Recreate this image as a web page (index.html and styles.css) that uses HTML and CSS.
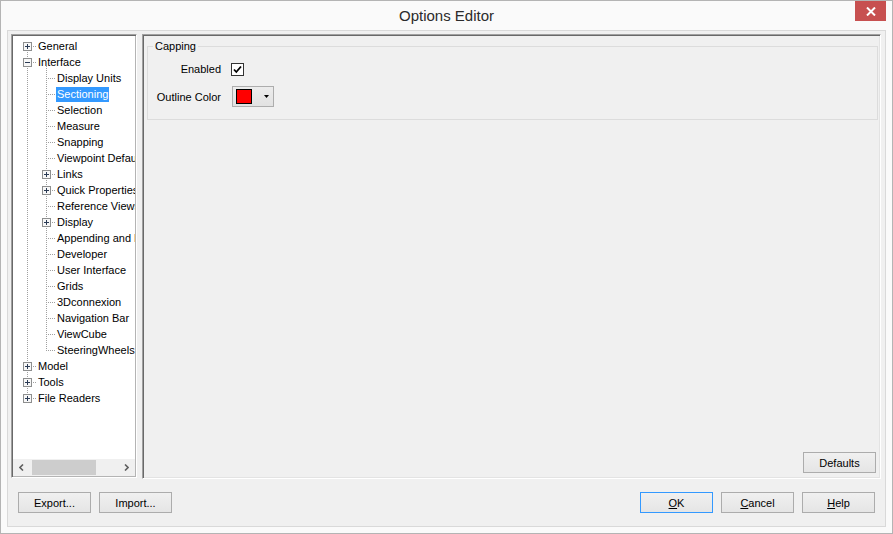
FILE: index.html
```html
<!DOCTYPE html>
<html>
<head>
<meta charset="utf-8">
<title>Options Editor</title>
<link rel="stylesheet" href="styles.css">
</head>
<body>
<div class="window">
  <div class="titlebar">
    <div></div>
    <div class="title">Options Editor</div>
    <div class="tb-right">
      <button class="close" aria-label="Close">
        <svg width="10" height="9" viewBox="0 0 10 9"><path d="M1 0.5L9 8.5M9 0.5L1 8.5" stroke="#fff" stroke-width="2"/></svg>
      </button>
    </div>
  </div>
  <div class="client">
    <div class="main">
      <div class="tree">
        <div class="tree-list">
          <div class="row"><span class="conn"><svg width="9" height="9" viewBox="0 0 9 9"><rect x="0.5" y="0.5" width="8" height="8" fill="#f7f7f7" stroke="#8e8f8f"/><path d="M2 4.5h5M4.5 2v5" stroke="#2b3b55"/></svg></span><span class="lbl">General</span></div>
          <div class="row"><span class="conn"><svg width="9" height="9" viewBox="0 0 9 9"><rect x="0.5" y="0.5" width="8" height="8" fill="#f7f7f7" stroke="#8e8f8f"/><path d="M2 4.5h5" stroke="#2b3b55"/></svg></span><span class="lbl">Interface</span></div>
          <div class="row l1"><span class="conn"></span><span class="lbl">Display Units</span></div>
          <div class="row l1"><span class="conn"></span><span class="lbl selected">Sectioning</span></div>
          <div class="row l1"><span class="conn"></span><span class="lbl">Selection</span></div>
          <div class="row l1"><span class="conn"></span><span class="lbl">Measure</span></div>
          <div class="row l1"><span class="conn"></span><span class="lbl">Snapping</span></div>
          <div class="row l1"><span class="conn"></span><span class="lbl">Viewpoint Defaults</span></div>
          <div class="row l1"><span class="conn"><svg width="9" height="9" viewBox="0 0 9 9"><rect x="0.5" y="0.5" width="8" height="8" fill="#f7f7f7" stroke="#8e8f8f"/><path d="M2 4.5h5M4.5 2v5" stroke="#2b3b55"/></svg></span><span class="lbl">Links</span></div>
          <div class="row l1"><span class="conn"><svg width="9" height="9" viewBox="0 0 9 9"><rect x="0.5" y="0.5" width="8" height="8" fill="#f7f7f7" stroke="#8e8f8f"/><path d="M2 4.5h5M4.5 2v5" stroke="#2b3b55"/></svg></span><span class="lbl">Quick Properties</span></div>
          <div class="row l1"><span class="conn"></span><span class="lbl">Reference Views</span></div>
          <div class="row l1"><span class="conn"><svg width="9" height="9" viewBox="0 0 9 9"><rect x="0.5" y="0.5" width="8" height="8" fill="#f7f7f7" stroke="#8e8f8f"/><path d="M2 4.5h5M4.5 2v5" stroke="#2b3b55"/></svg></span><span class="lbl">Display</span></div>
          <div class="row l1"><span class="conn"></span><span class="lbl">Appending and Merging</span></div>
          <div class="row l1"><span class="conn"></span><span class="lbl">Developer</span></div>
          <div class="row l1"><span class="conn"></span><span class="lbl">User Interface</span></div>
          <div class="row l1"><span class="conn"></span><span class="lbl">Grids</span></div>
          <div class="row l1"><span class="conn"></span><span class="lbl">3Dconnexion</span></div>
          <div class="row l1"><span class="conn"></span><span class="lbl">Navigation Bar</span></div>
          <div class="row l1"><span class="conn"></span><span class="lbl">ViewCube</span></div>
          <div class="row l1"><span class="conn"></span><span class="lbl">SteeringWheels</span></div>
          <div class="row"><span class="conn"><svg width="9" height="9" viewBox="0 0 9 9"><rect x="0.5" y="0.5" width="8" height="8" fill="#f7f7f7" stroke="#8e8f8f"/><path d="M2 4.5h5M4.5 2v5" stroke="#2b3b55"/></svg></span><span class="lbl">Model</span></div>
          <div class="row"><span class="conn"><svg width="9" height="9" viewBox="0 0 9 9"><rect x="0.5" y="0.5" width="8" height="8" fill="#f7f7f7" stroke="#8e8f8f"/><path d="M2 4.5h5M4.5 2v5" stroke="#2b3b55"/></svg></span><span class="lbl">Tools</span></div>
          <div class="row"><span class="conn"><svg width="9" height="9" viewBox="0 0 9 9"><rect x="0.5" y="0.5" width="8" height="8" fill="#f7f7f7" stroke="#8e8f8f"/><path d="M2 4.5h5M4.5 2v5" stroke="#2b3b55"/></svg></span><span class="lbl">File Readers</span></div>
        </div>
        <div class="hscroll">
          <span class="sb-btn"><svg width="5" height="7" viewBox="0 0 5 7"><path d="M4 0.5L1 3.5L4 6.5" fill="none" stroke="#606060" stroke-width="1.6"/></svg></span>
          <span class="sb-track"><span class="sb-thumb"></span></span>
          <span class="sb-btn"><svg width="5" height="7" viewBox="0 0 5 7"><path d="M1 0.5L4 3.5L1 6.5" fill="none" stroke="#606060" stroke-width="1.6"/></svg></span>
        </div>
      </div>
      <div class="panel">
        <fieldset class="group">
          <legend>Capping</legend>
          <div class="form">
            <span class="flabel">Enabled</span>
            <span class="check"><svg width="11" height="11" viewBox="0 0 11 11"><path d="M2 5.5L4.3 8L9 2.5" fill="none" stroke="#000" stroke-width="1.8"/></svg></span>
            <span class="flabel">Outline Color</span>
            <span class="color-btn"><span class="swatch"></span><svg class="dd" width="5" height="3" viewBox="0 0 5 3"><path d="M0 0H5L2.5 3Z" fill="#000"/></svg></span>
          </div>
        </fieldset>
        <button class="btn defaults">Defaults</button>
      </div>
    </div>
    <div class="footer">
      <div class="btn-group">
        <button class="btn">Export...</button>
        <button class="btn">Import...</button>
      </div>
      <div class="btn-group">
        <button class="btn default"><u>O</u>K</button>
        <button class="btn"><u>C</u>ancel</button>
        <button class="btn"><u>H</u>elp</button>
      </div>
    </div>
  </div>
</div>
</body>
</html>
```

FILE: styles.css
```css
* { box-sizing: border-box; }

body {
  margin: 0;
  font-family: "Liberation Sans", Arial, sans-serif;
  font-size: 11px;
  color: #000;
  background: #fff;
}

.window {
  width: 893px;
  height: 534px;
  border: 1px solid #b4b4b4;
  background: #fafafa;
  display: flex;
  flex-direction: column;
}

.titlebar {
  height: 29px;
  flex: none;
  display: grid;
  grid-template-columns: 1fr auto 1fr;
}

.title {
  font-size: 15px;
  line-height: 18px;
  padding-top: 6px;
  color: #2b2b2b;
}

.tb-right {
  display: flex;
  justify-content: flex-end;
  align-items: flex-start;
  padding-right: 6px;
}

.close {
  width: 31px;
  height: 20px;
  border: 0;
  padding: 0;
  background: #c75050;
  display: flex;
  align-items: center;
  justify-content: center;
}

.close svg { display: block; }

.client {
  flex: 1;
  margin: 0 6px 6px 6px;
  border: 1px solid #d9d9d9;
  background: #f0f0f0;
  padding: 3px 4px 0 3px;
  display: flex;
  flex-direction: column;
}

.main {
  display: flex;
  gap: 5px;
  height: 445px;
  align-items: flex-start;
}

/* tree */
.tree {
  width: 126px;
  height: 444px;
  flex: none;
  border: 1px solid;
  border-color: #a0a0a0 #ffffff #ffffff #a0a0a0;
  box-shadow: inset 1px 1px 0 #696969, inset -1px -1px 0 #b4b4b4;
  background: #fff;
  padding: 1px;
  display: flex;
  flex-direction: column;
}

.tree-list {
  flex: 1;
  overflow: hidden;
  padding-top: 2px;
  background-image:
    repeating-linear-gradient(to bottom, #a0a0a0 0 1px, transparent 1px 2px),
    repeating-linear-gradient(to bottom, #a0a0a0 0 1px, transparent 1px 2px);
  background-size: 1px 353px, 1px 285px;
  background-position: 14px 10px, 33px 30px;
  background-repeat: no-repeat;
}

.row {
  height: 16px;
  display: flex;
  padding-left: 5px;
  white-space: nowrap;
}

.row.l1 { padding-left: 24px; }

.conn {
  width: 19px;
  height: 16px;
  flex: none;
  background: repeating-linear-gradient(to right, #a0a0a0 0 1px, transparent 1px 2px) 9px 8px / 10px 1px no-repeat;
}

.conn svg {
  display: block;
  margin: 4px 0 0 5px;
}

.lbl {
  padding: 0 1px;
  margin-top: 1px;
  height: 15px;
  line-height: 15px;
}

.lbl.selected {
  background: #3399ff;
  color: #fff;
}

.hscroll {
  height: 17px;
  flex: none;
  display: flex;
  background: #f0f0f0;
}

.sb-btn {
  width: 17px;
  flex: none;
  display: flex;
  align-items: center;
  justify-content: center;
}

.sb-btn svg { display: block; }

.sb-track {
  flex: 1;
  padding: 1px 2px;
}

.sb-thumb {
  display: block;
  width: 64px;
  height: 15px;
  background: #cdcdcd;
}

/* right panel */
.panel {
  width: 739px;
  height: 445px;
  flex: none;
  border: 1px solid;
  border-color: #a0a0a0 #ffffff #ffffff #a0a0a0;
  box-shadow: inset 1px 1px 0 #696969, inset -1px -1px 0 #e3e3e3;
  padding: 4px 2px 5px 4px;
  display: flex;
  flex-direction: column;
}

.group {
  margin: 0;
  padding: 7px 0 12px 0;
  border: 1px solid #dcdcdc;
  min-width: 0;
}

.group legend {
  margin-left: 5px;
  padding: 0 2px;
  line-height: 14px;
  font-size: 11px;
}

.form {
  display: grid;
  grid-template-columns: 73px auto;
  grid-template-rows: 18px 21px;
  column-gap: 10px;
  row-gap: 8px;
  align-items: center;
  justify-content: start;
}

.flabel { text-align: right; }

.check {
  width: 13px;
  height: 13px;
  border: 1px solid #333;
  background: #fff;
  display: block;
}

.check svg { display: block; }

.color-btn {
  width: 42px;
  height: 21px;
  margin-left: 1px;
  border: 1px solid #adadad;
  background: linear-gradient(#ececec, #e2e2e2);
  display: flex;
  align-items: center;
  padding-left: 3px;
}

.swatch {
  width: 16px;
  height: 15px;
  border: 1px solid #000;
  background: #ff0000;
  flex: none;
}

.dd {
  display: block;
  margin-left: 12px;
}

.btn {
  width: 73px;
  height: 21px;
  padding: 0;
  border: 1px solid #acacac;
  background: linear-gradient(#f0f0f0, #e5e5e5);
  font-family: inherit;
  font-size: 11px;
  color: #000;
}

.btn.default { border-color: #3399ff; }

.defaults {
  margin-top: auto;
  align-self: flex-end;
  margin-right: 2px;
}

.footer {
  display: flex;
  justify-content: space-between;
  padding: 13px 6px 0 7px;
}

.btn-group {
  display: flex;
  gap: 8px;
}
```
